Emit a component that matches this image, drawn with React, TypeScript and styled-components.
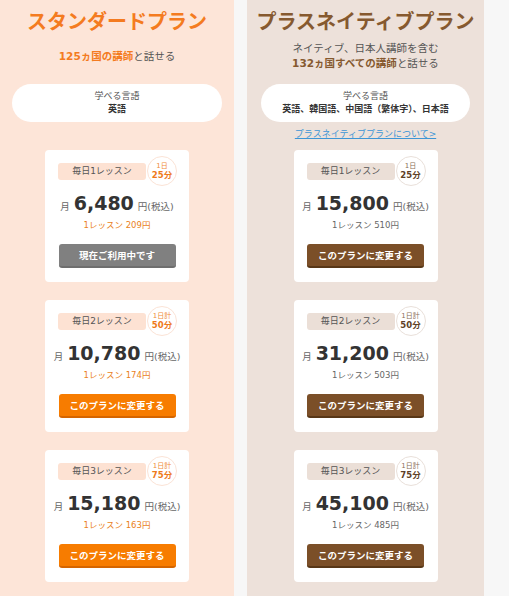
import React from 'react';
import styled, { createGlobalStyle } from 'styled-components';

type Variant = 'standard' | 'native';

const palette = {
  standard: {
    bg: '#fde5d8',
    tag: '#fde2d3',
    accent: '#f47b20',
    ring: '#fbe3d6',
    badgeTop: '#f08a3a',
    badge: '#ee7a1b',
    per: '#ea7f22',
    button: '#f77c00',
    edge: '#d56500',
  },
  native: {
    bg: '#ede1da',
    tag: '#ebdfd7',
    accent: '#86592f',
    ring: '#e9e0da',
    badgeTop: '#8a6e58',
    badge: '#5e3f26',
    per: '#666666',
    button: '#7b4f28',
    edge: '#583717',
  },
};

const GlobalStyle = createGlobalStyle`
  html, body {
    margin: 0;
    padding: 0;
    background: #f7f7f7;
  }
  body {
    font-family: "DejaVu Sans", "Noto Sans CJK JP", sans-serif;
    color: #333;
  }
`;

const Page = styled.main`
  display: flex;
  gap: 13px;
  width: 509px;
  min-height: 100vh;
`;

const Column = styled.section<{ $variant: Variant; $width: number }>`
  width: ${(p) => p.$width}px;
  flex: 0 0 auto;
  background: ${(p) => palette[p.$variant].bg};
  display: flex;
  flex-direction: column;
  align-items: center;
  padding-bottom: 14px;
`;

const Title = styled.h1<{ $variant: Variant }>`
  margin: 0;
  padding-top: 7px;
  font-family: "Noto Sans CJK JP", sans-serif;
  font-size: 20px;
  line-height: 28px;
  font-weight: 700;
  color: ${(p) => palette[p.$variant].accent};
  white-space: nowrap;
`;

const Lead = styled.div`
  margin-top: 6px;
  height: 30px;
  display: flex;
  flex-direction: column;
  justify-content: center;
  align-items: center;
  font-size: 10.5px;
  line-height: 15px;
  color: #555;
`;

const Em = styled.strong<{ $variant: Variant }>`
  font-weight: 700;
  color: ${(p) => palette[p.$variant].accent};
`;

const LanguageBox = styled.div<{ $inset: number }>`
  align-self: stretch;
  margin: 13px ${(p) => p.$inset}px 0;
  height: 38px;
  box-sizing: border-box;
  padding-top: 6px;
  border-radius: 19px;
  background: #fff;
  text-align: center;
  font-size: 9px;
  line-height: 13px;
`;

const LanguageLabel = styled.div`
  color: #555;
`;

const LanguageList = styled.div`
  font-weight: 700;
  color: #333;
`;

const LinkSlot = styled.div`
  height: 28px;
  box-sizing: border-box;
  padding-bottom: 5px;
  display: flex;
  align-items: center;
  justify-content: center;
`;

const AboutLink = styled.a`
  font-size: 9px;
  color: #3d96d6;
  text-decoration: underline;
  cursor: pointer;
`;

const CardList = styled.div`
  display: flex;
  flex-direction: column;
  gap: 18px;
`;

const Card = styled.article`
  width: 144px;
  box-sizing: border-box;
  padding: 13px 13px 14px;
  background: #fff;
  border-radius: 4px;
  display: flex;
  flex-direction: column;
  align-items: center;
`;

const TagRow = styled.div`
  align-self: stretch;
  display: flex;
  align-items: center;
  height: 17px;
`;

const Tag = styled.div<{ $variant: Variant }>`
  flex: 0 0 88px;
  height: 17px;
  border-radius: 3px;
  background: ${(p) => palette[p.$variant].tag};
  color: #555;
  font-size: 9px;
  line-height: 17px;
  text-align: center;
`;

const Badge = styled.div<{ $variant: Variant }>`
  flex: 0 0 auto;
  width: 30px;
  height: 30px;
  margin: -7px 0 -6px 1px;
  box-sizing: border-box;
  border-radius: 50%;
  border: 1px solid ${(p) => palette[p.$variant].ring};
  background: #fff;
  display: flex;
  flex-direction: column;
  align-items: center;
  justify-content: center;
  line-height: 9px;
`;

const BadgeTop = styled.span<{ $variant: Variant }>`
  font-size: 7px;
  color: ${(p) => palette[p.$variant].badgeTop};
`;

const BadgeMain = styled.span<{ $variant: Variant }>`
  font-size: 8.5px;
  font-weight: 700;
  color: ${(p) => palette[p.$variant].badge};
`;

const PriceRow = styled.div`
  margin-top: 11px;
  height: 24px;
  display: flex;
  align-items: baseline;
  justify-content: center;
  white-space: nowrap;
`;

const Unit = styled.span`
  font-size: 9.5px;
  color: #666;
`;

const Amount = styled.span`
  margin: 0 4px 0 4px;
  font-size: 19px;
  line-height: 24px;
  font-weight: 700;
  color: #333;
`;

const PerLesson = styled.div<{ $variant: Variant }>`
  margin-top: 3px;
  font-size: 8.5px;
  line-height: 14px;
  color: ${(p) => palette[p.$variant].per};
  white-space: nowrap;
`;

const ActionButton = styled.button<{ $variant: Variant; $current?: boolean }>`
  margin-top: 12px;
  width: 117px;
  height: 24px;
  box-sizing: border-box;
  padding: 0;
  border: none;
  border-bottom: 2px solid ${(p) => (p.$current ? '#6e6e6e' : palette[p.$variant].edge)};
  border-radius: 3px;
  background: ${(p) => (p.$current ? '#808080' : palette[p.$variant].button)};
  color: #fff;
  font-family: "Noto Sans CJK JP", sans-serif;
  font-size: 9.5px;
  font-weight: 700;
  line-height: 22px;
  cursor: pointer;
`;

type Plan = {
  tag: string;
  badgeTop: string;
  minutes: string;
  price: string;
  perLesson: string;
  current?: boolean;
};

const standardPlans: Plan[] = [
  { tag: '毎日1レッスン', badgeTop: '1日', minutes: '25分', price: '6,480', perLesson: '209', current: true },
  { tag: '毎日2レッスン', badgeTop: '1日計', minutes: '50分', price: '10,780', perLesson: '174' },
  { tag: '毎日3レッスン', badgeTop: '1日計', minutes: '75分', price: '15,180', perLesson: '163' },
];

const nativePlans: Plan[] = [
  { tag: '毎日1レッスン', badgeTop: '1日', minutes: '25分', price: '15,800', perLesson: '510' },
  { tag: '毎日2レッスン', badgeTop: '1日計', minutes: '50分', price: '31,200', perLesson: '503' },
  { tag: '毎日3レッスン', badgeTop: '1日計', minutes: '75分', price: '45,100', perLesson: '485' },
];

function PlanCard({ plan, variant }: { plan: Plan; variant: Variant }) {
  return (
    <Card>
      <TagRow>
        <Tag $variant={variant}>{plan.tag}</Tag>
        <Badge $variant={variant}>
          <BadgeTop $variant={variant}>{plan.badgeTop}</BadgeTop>
          <BadgeMain $variant={variant}>{plan.minutes}</BadgeMain>
        </Badge>
      </TagRow>
      <PriceRow>
        <Unit>月</Unit>
        <Amount>{plan.price}</Amount>
        <Unit>円(税込)</Unit>
      </PriceRow>
      <PerLesson $variant={variant}>1レッスン {plan.perLesson}円</PerLesson>
      <ActionButton $variant={variant} $current={plan.current}>
        {plan.current ? '現在ご利用中です' : 'このプランに変更する'}
      </ActionButton>
    </Card>
  );
}

export default function App() {
  return (
    <>
      <GlobalStyle />
      <Page>
        <Column $variant="standard" $width={234}>
          <Title $variant="standard">スタンダードプラン</Title>
          <Lead>
            <div>
              <Em $variant="standard">125ヵ国の講師</Em>と話せる
            </div>
          </Lead>
          <LanguageBox $inset={12}>
            <LanguageLabel>学べる言語</LanguageLabel>
            <LanguageList>英語</LanguageList>
          </LanguageBox>
          <LinkSlot />
          <CardList>
            {standardPlans.map((plan) => (
              <PlanCard key={plan.tag} plan={plan} variant="standard" />
            ))}
          </CardList>
        </Column>
        <Column $variant="native" $width={237}>
          <Title $variant="native">プラスネイティブプラン</Title>
          <Lead>
            <div>ネイティブ、日本人講師を含む</div>
            <div>
              <Em $variant="native">132ヵ国すべての講師</Em>と話せる
            </div>
          </Lead>
          <LanguageBox $inset={14}>
            <LanguageLabel>学べる言語</LanguageLabel>
            <LanguageList>英語、韓国語、中国語（繁体字）、日本語</LanguageList>
          </LanguageBox>
          <LinkSlot>
            <AboutLink>プラスネイティブプランについて&gt;</AboutLink>
          </LinkSlot>
          <CardList>
            {nativePlans.map((plan) => (
              <PlanCard key={plan.tag} plan={plan} variant="native" />
            ))}
          </CardList>
        </Column>
      </Page>
    </>
  );
}
